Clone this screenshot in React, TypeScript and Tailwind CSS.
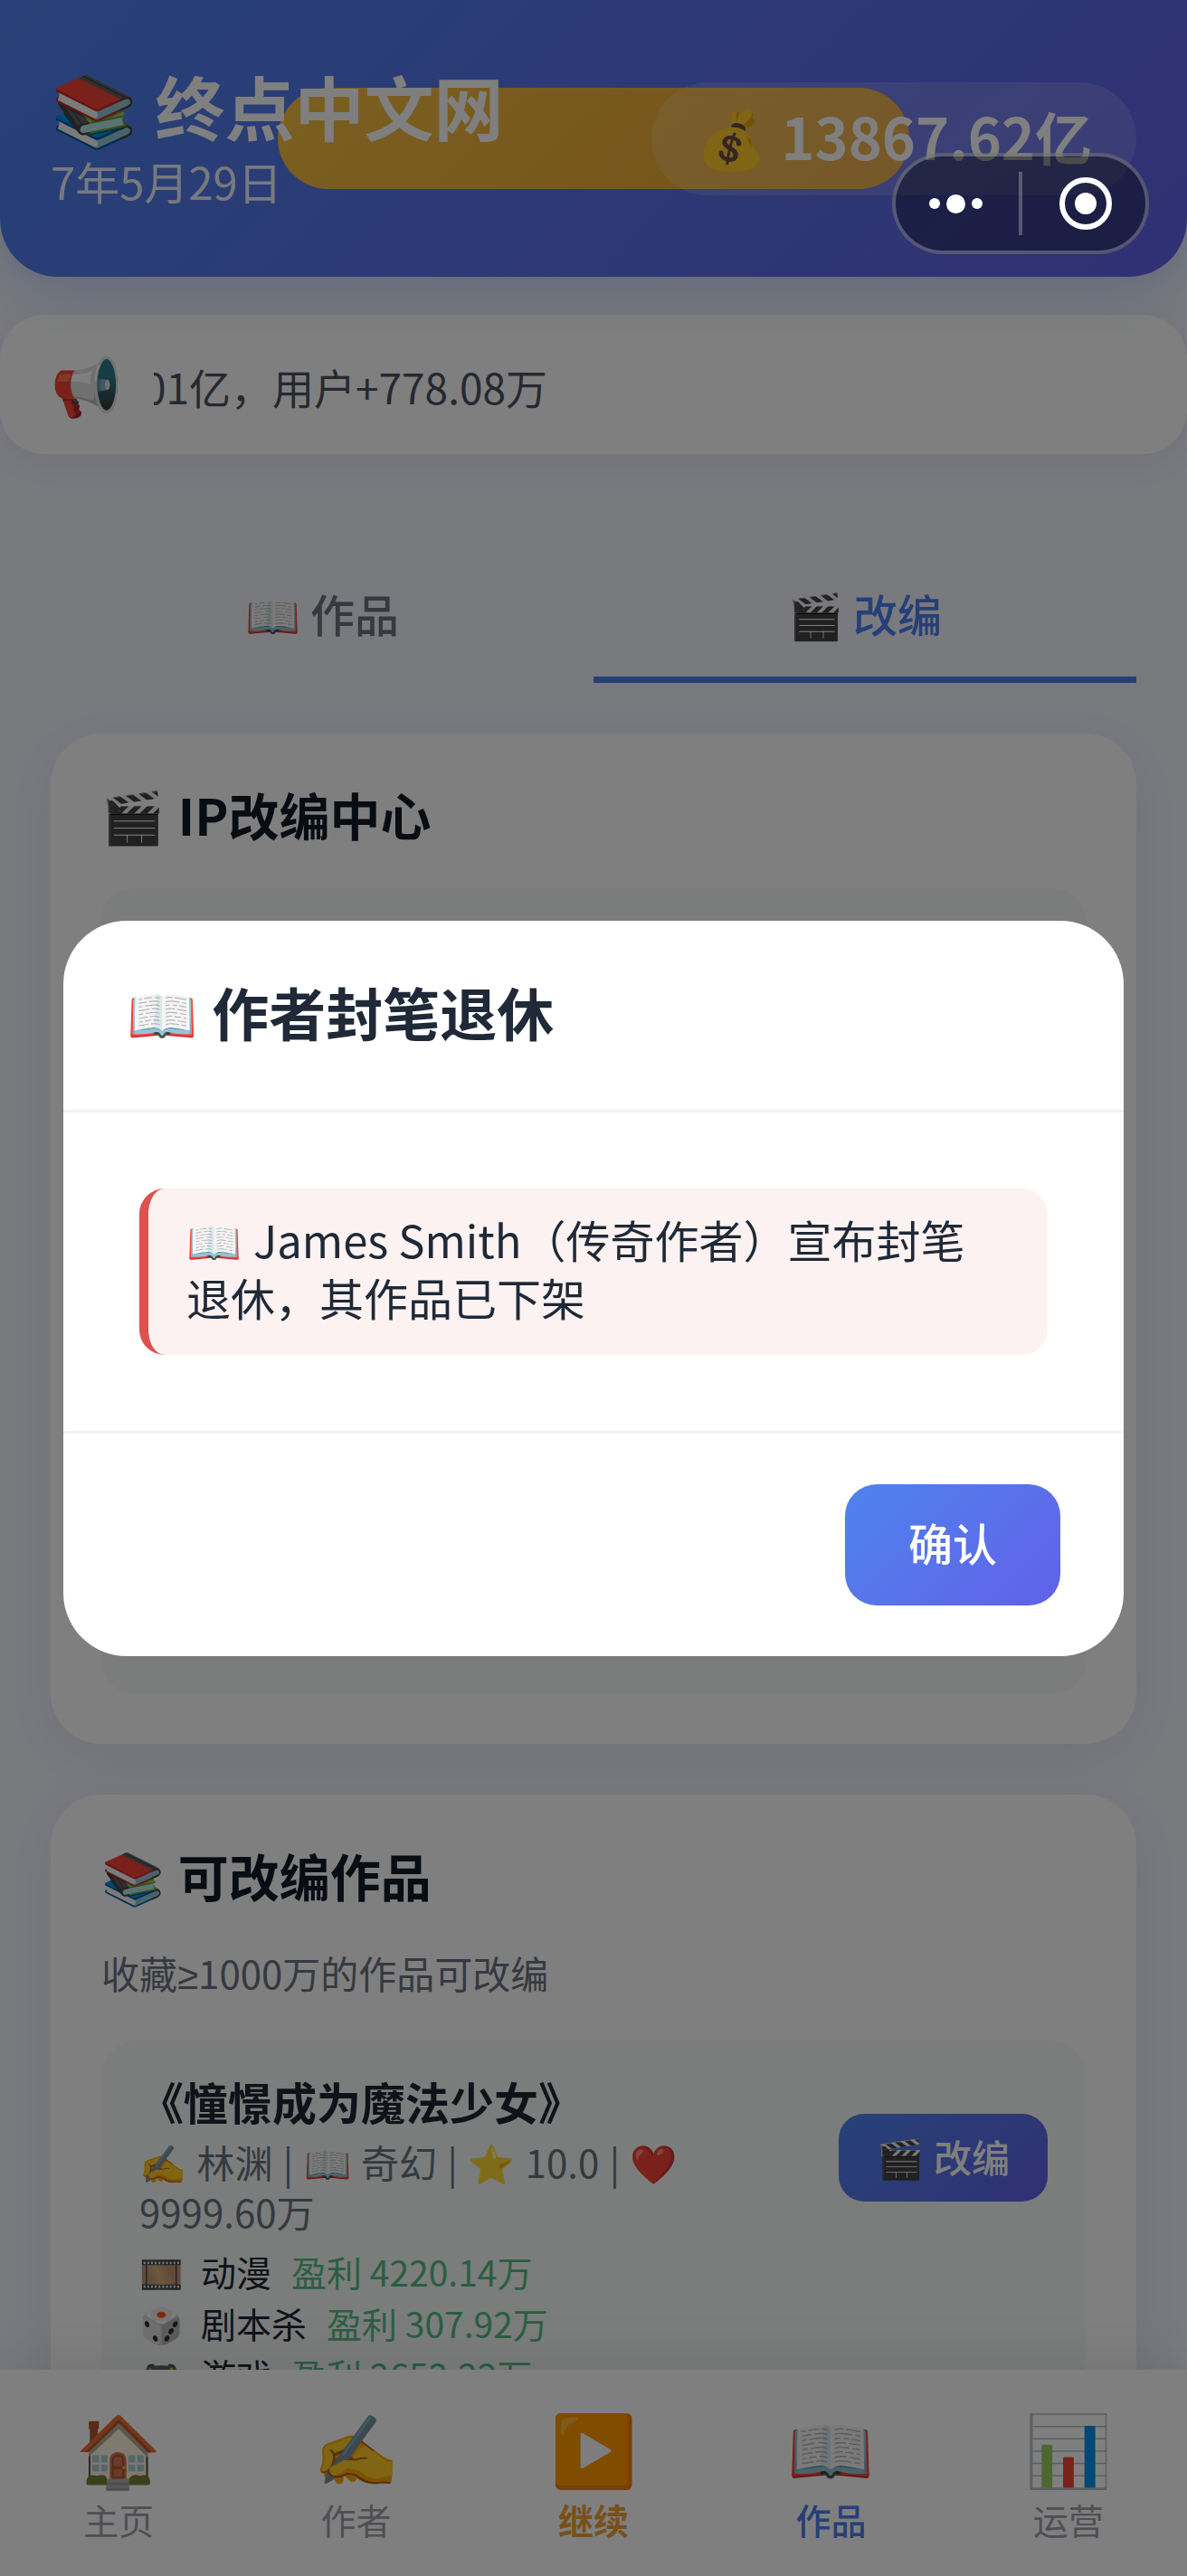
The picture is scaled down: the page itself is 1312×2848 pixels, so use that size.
import React from 'react';

interface AdaptationRow {
  icon: string;
  name: string;
  profit: string;
}

interface NavItem {
  icon: string;
  label: string;
  color: string;
}

const adaptations: AdaptationRow[] = [
  { icon: '🎞️', name: '动漫', profit: '盈利 4220.14万' },
  { icon: '🎲', name: '剧本杀', profit: '盈利 307.92万' },
  { icon: '🎮', name: '游戏', profit: '盈利 2652.22万' },
];

const navItems: NavItem[] = [
  { icon: '🏠', label: '主页', color: 'text-[#9c9fa9]' },
  { icon: '✍️', label: '作者', color: 'text-[#9c9fa9]' },
  { icon: '▶️', label: '继续', color: 'font-bold text-[#efa136]' },
  { icon: '📖', label: '作品', color: 'font-medium text-[#4d7fee]' },
  { icon: '📊', label: '运营', color: 'text-[#9c9fa9]' },
];

const Header: React.FC = () => (
  <header className="relative z-10 rounded-b-[64px] bg-linear-135 from-[#4d83ee] to-[#6161e8] px-14 py-[66px] shadow-[0_14px_56px_rgba(77,127,238,0.3)]">
    <div className="absolute top-[97px] left-1/2 h-28 w-[698px] -translate-x-1/2 rounded-full bg-linear-135 from-[#f5c043] to-[#eba233]"></div>
    <div className="relative flex items-center justify-between text-white">
      <div className="pb-2">
        <h1 className="text-[77px] leading-[102px] font-bold">
          <span className="mr-0.5">📚</span> 终点中文网
        </h1>
        <p className="text-[49px] leading-[64px] text-white/90">7年5月29日</p>
      </div>
      <div className="flex h-[125px] items-center gap-4 rounded-full bg-white/15 px-[49px] pb-1.5 text-[63px] font-bold">
        <span>💰</span>
        <span>13867.62亿</span>
      </div>
    </div>
  </header>
);

const Notice: React.FC = () => (
  <div className="mt-[42px] flex h-[154px] items-center gap-9 rounded-[49px] bg-white px-14 shadow-[0_7px_42px_rgba(60,80,180,0.1)]">
    <span className="pb-1 text-[63px]">📢</span>
    <div className="flex w-[435px] justify-end overflow-hidden pt-1 text-[46px] whitespace-nowrap text-[#4a5263]">
      公告：收入+2.01亿，用户+778.08万
    </div>
  </div>
);

const Tabs: React.FC = () => (
  <div className="mt-[110px] flex text-[49px] leading-[64px] font-medium">
    <button className="flex-1 border-b-[7px] border-transparent pt-[34px] pb-[38px] text-[#6b7280]">📖 作品</button>
    <button className="flex-1 border-b-[7px] border-[#4d7fee] pt-[34px] pb-[38px] text-[#4d7fee]">🎬 改编</button>
  </div>
);

const Card: React.FC<{ icon: string; title: string; children: React.ReactNode }> = ({ icon, title, children }) => (
  <section className="mt-14 rounded-[56px] bg-white p-14 shadow-[0_14px_56px_rgba(60,80,180,0.1)]">
    <h2 className="text-[56px] leading-[66px] font-bold text-[#111827]">
      <span className="mr-0.5">{icon}</span> {title}
    </h2>
    {children}
  </section>
);

const Divider: React.FC = () => <span className="mx-0.5">|</span>;

const WorkItem: React.FC = () => (
  <article className="mt-11 rounded-[42px] bg-[#f5faf7] px-[42px] pt-9 pb-[42px]">
    <div className="flex items-center justify-between">
      <div className="w-[700px]">
        <h3 className="text-[49px] leading-[64px] font-bold text-[#1f2633]">《憧憬成为魔法少女》</h3>
        <p className="mt-[7px] text-[42px] leading-[55px] text-[#6b7280]">
          <span className="mr-0.5">✍️</span> 林渊 <Divider /> <span className="mr-0.5">📖</span> 奇幻 <Divider />{' '}
          <span className="mr-0.5">⭐</span> 10.0 <Divider /> ❤️ 9999.60万
        </p>
      </div>
      <button className="mt-2 h-[97px] rounded-[28px] bg-linear-135 from-[#4d83ee] to-[#6161e8] px-[42px] pb-1 text-[42px] font-medium text-white">
        <span className="mr-0.5">🎬</span> 改编
      </button>
    </div>
    <ul className="mt-3.5 flex flex-col gap-[7px] text-[39px] leading-[50px] text-[#1f2633]">
      {adaptations.map((row) => (
        <li key={row.name} className="flex">
          <span className="w-[68px]">{row.icon}</span>
          <span className="mr-[22px]">{row.name}</span>
          <span className="text-[#57bb87]">{row.profit}</span>
        </li>
      ))}
    </ul>
  </article>
);

const BottomNav: React.FC = () => (
  <nav className="relative z-10 flex h-[228px] shrink-0 bg-white pt-[35px] shadow-[0_-7px_56px_rgba(0,0,0,0.1)]">
    {navItems.map((item) => (
      <button key={item.label} className="flex flex-1 flex-col items-center justify-start">
        <span className="text-[77px] leading-[98px]">{item.icon}</span>
        <span className={`mt-1 text-[39px] leading-[56px] ${item.color}`}>{item.label}</span>
      </button>
    ))}
  </nav>
);

const RetireDialog: React.FC = () => (
  <div className="fixed inset-0 z-20 flex items-center justify-center bg-black/50 px-[70px]">
    <div role="dialog" aria-labelledby="dialog-title" className="w-full rounded-[70px] bg-white text-[#1f2937]">
      <h2 id="dialog-title" className="px-[70px] pt-[58px] pb-[67px] text-[63px] leading-[84px] font-bold">
        <span className="mr-0.5">📖</span> 作者封笔退休
      </h2>
      <div className="border-y-[3px] border-[#f2f4f4] px-[84px] py-[84px]">
        <p className="rounded-[28px] border-l-[10px] border-[#db524e] bg-[#fcf2f1] pt-6 pr-14 pb-8 pl-[42px] text-[49px] leading-[64px]">
          <span className="mr-0.5">📖</span> James Smith（传奇作者）宣布封笔退休，其作品已下架
        </p>
      </div>
      <div className="flex justify-end px-[70px] py-14">
        <button className="h-[134px] rounded-[35px] bg-linear-135 from-[#4d83ee] to-[#6161e8] px-[70px] pb-1.5 text-[49px] font-medium text-white">
          确认
        </button>
      </div>
    </div>
  </div>
);

const CapsuleMenu: React.FC = () => (
  <div className="fixed top-[169px] right-[42px] z-30 flex h-28 w-[284px] items-center rounded-full border-4 border-white/25 bg-black/40">
    <button aria-label="更多" className="flex flex-1 items-center justify-center gap-[7px] pr-1">
      <span className="size-3 rounded-full bg-white"></span>
      <span className="size-[21px] rounded-full bg-white"></span>
      <span className="size-3 rounded-full bg-white"></span>
    </button>
    <span className="h-[70px] w-1 bg-white/25"></span>
    <button aria-label="关闭" className="flex flex-1 items-center justify-center pl-1">
      <span className="flex size-[58px] items-center justify-center rounded-full border-[6px] border-white">
        <span className="size-6 rounded-full bg-white"></span>
      </span>
    </button>
  </div>
);

const App: React.FC = () => {
  return (
    <div className="flex h-screen flex-col overflow-hidden bg-[#f3f5fd] font-['Noto_Sans_CJK_SC',sans-serif]">
      <Header />
      <main className="min-h-0 flex-1 overflow-hidden">
        <Notice />
        <div className="px-14">
          <Tabs />
          <Card icon="🎬" title="IP改编中心">
            <div className="mt-[49px] h-[890px] rounded-[35px] bg-[#f5faf7]"></div>
          </Card>
          <Card icon="📚" title="可改编作品">
            <p className="mt-[47px] text-[42px] leading-[56px] text-[#6b7280]">
              收藏<span className="font-['Noto_Sans',sans-serif]">≥</span>1000万的作品可改编
            </p>
            <WorkItem />
          </Card>
        </div>
      </main>
      <BottomNav />
      <RetireDialog />
      <CapsuleMenu />
    </div>
  );
};

export default App;
